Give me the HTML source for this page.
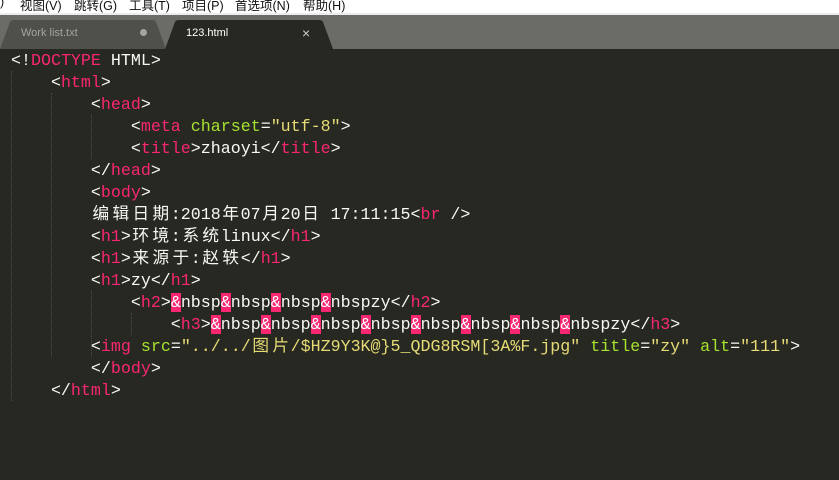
<!DOCTYPE html>
<html><head><meta charset="utf-8"><style>
body{margin:0;width:839px;height:480px;overflow:hidden;background:#272822;position:relative;font-family:"Liberation Sans","Noto Sans CJK SC",sans-serif}
#menu{position:absolute;left:0;top:0;width:839px;height:13px;background:#fff;border-bottom:2px solid #ececec;overflow:hidden}
#menu span{position:absolute;top:-5px;font-size:12.5px;color:#111;white-space:nowrap}
#tabs{position:absolute;left:0;top:15px;width:839px;height:34px;background:#6b6c66}
.tab{position:absolute;top:5px;height:29px}
.tab svg{position:absolute;left:0;top:0}
.tab span{position:absolute;top:7px;font-size:11px}
#ed{position:absolute;left:0;top:49px;width:839px;height:431px;background:#272822}
pre{margin:0;position:absolute;left:11px;top:1px;font-family:"Liberation Mono","Noto Sans CJK SC",monospace;font-size:16.65px;line-height:22px;color:#f8f8f2}
.t{color:#f92672}.a{color:#a6e22e}.s{color:#e6db74}
.c{display:inline-block;width:2ch;text-align:center}
.h{background:#f92672;color:#fff}
.g{position:absolute;width:0;border-left:1px dotted #4a4b44}
</style></head><body>
<div id="menu">
<span style="left:0">)</span><span style="left:20px">视图(V)</span><span style="left:74px">跳转(G)</span><span style="left:129px">工具(T)</span><span style="left:182px">项目(P)</span><span style="left:235px">首选项(N)</span><span style="left:303px">帮助(H)</span>
</div>
<div id="tabs">
<div class="tab" style="left:0;width:170px"><svg width="170" height="29"><path d="M0 29 L10 2 Q11 0 14 0 L152 0 Q155 0 156 2 L166 29 Z" fill="#4f504b"/></svg><span style="left:21px;color:#a5a59f">Work list.txt</span><span style="left:140px;top:9px;width:7px;height:7px;border-radius:50%;background:#a5a59f"></span></div>
<div class="tab" style="left:165px;width:172px"><svg width="172" height="29"><path d="M0 29 L10 2 Q11 0 14 0 L154 0 Q157 0 158 2 L168 29 Z" fill="#272822"/></svg><span style="left:21px;color:#fff">123.html</span><span style="left:137px;top:5px;color:#ccc;font-size:14px">×</span></div>
</div>
<div id="ed">
<div class="g" style="left:11px;top:22px;height:330px"></div>
<div class="g" style="left:51px;top:44px;height:264px"></div>
<div class="g" style="left:91px;top:66px;height:44px"></div>
<div class="g" style="left:91px;top:242px;height:66px"></div>
<div class="g" style="left:131px;top:264px;height:22px"></div>
<pre>&lt;!<span class="t">DOCTYPE</span> HTML&gt;
    &lt;<span class="t">html</span>&gt;
        &lt;<span class="t">head</span>&gt;
            &lt;<span class="t">meta</span> <span class="a">charset</span>=<span class="s">"utf-8"</span>&gt;
            &lt;<span class="t">title</span>&gt;zhaoyi&lt;/<span class="t">title</span>&gt;
        &lt;/<span class="t">head</span>&gt;
        &lt;<span class="t">body</span>&gt;
        <span class="c">编</span><span class="c">辑</span><span class="c">日</span><span class="c">期</span>:2018<span class="c">年</span>07<span class="c">月</span>20<span class="c">日</span> 17:11:15&lt;<span class="t">br</span> /&gt;
        &lt;<span class="t">h1</span>&gt;<span class="c">环</span><span class="c">境</span>:<span class="c">系</span><span class="c">统</span>linux&lt;/<span class="t">h1</span>&gt;
        &lt;<span class="t">h1</span>&gt;<span class="c">来</span><span class="c">源</span><span class="c">于</span>:<span class="c">赵</span><span class="c">轶</span>&lt;/<span class="t">h1</span>&gt;
        &lt;<span class="t">h1</span>&gt;zy&lt;/<span class="t">h1</span>&gt;
            &lt;<span class="t">h2</span>&gt;<span class="h">&amp;</span>nbsp<span class="h">&amp;</span>nbsp<span class="h">&amp;</span>nbsp<span class="h">&amp;</span>nbspzy&lt;/<span class="t">h2</span>&gt;
                &lt;<span class="t">h3</span>&gt;<span class="h">&amp;</span>nbsp<span class="h">&amp;</span>nbsp<span class="h">&amp;</span>nbsp<span class="h">&amp;</span>nbsp<span class="h">&amp;</span>nbsp<span class="h">&amp;</span>nbsp<span class="h">&amp;</span>nbsp<span class="h">&amp;</span>nbspzy&lt;/<span class="t">h3</span>&gt;
        &lt;<span class="t">img</span> <span class="a">src</span>=<span class="s">"../../<span class="c">图</span><span class="c">片</span>/$HZ9Y3K@}5_QDG8RSM[3A%F.jpg"</span> <span class="a">title</span>=<span class="s">"zy"</span> <span class="a">alt</span>=<span class="s">"111"</span>&gt;
        &lt;/<span class="t">body</span>&gt;
    &lt;/<span class="t">html</span>&gt;</pre>
</div>
</body></html>
